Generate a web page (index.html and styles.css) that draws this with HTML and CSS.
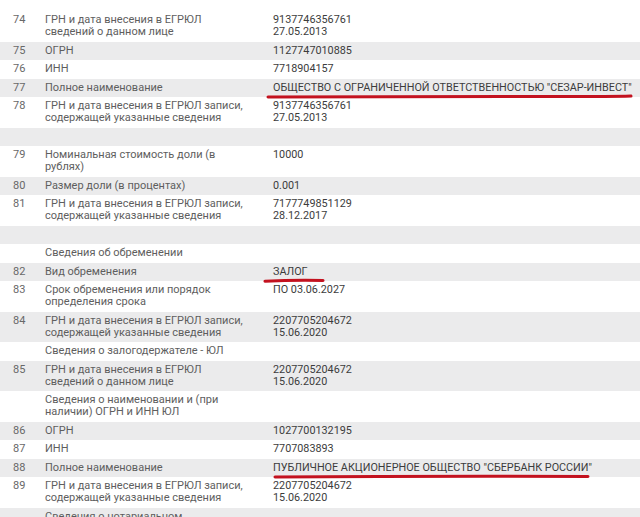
FILE: index.html
```html
<!DOCTYPE html>
<html lang="ru">
<head>
<meta charset="utf-8">
<title>Выписка ЕГРЮЛ</title>
<link rel="stylesheet" href="styles.css">
</head>
<body>
<div class="table">
  <div class="row"><div class="num">74</div><div class="label">ГРН и дата внесения в ЕГРЮЛ<br>сведений о данном лице</div><div class="value">9137746356761<br>27.05.2013</div></div>
  <div class="row"><div class="num">75</div><div class="label">ОГРН</div><div class="value">1127747010885</div></div>
  <div class="row"><div class="num">76</div><div class="label">ИНН</div><div class="value">7718904157</div></div>
  <div class="row"><div class="num">77</div><div class="label">Полное наименование</div><div class="value marked">ОБЩЕСТВО С ОГРАНИЧЕННОЙ ОТВЕТСТВЕННОСТЬЮ "СЕЗАР-ИНВЕСТ"<svg class="mark mark-long" viewBox="0 0 368 5" preserveAspectRatio="none"><path d="M2 2.9 Q120 2.2 240 2.5 T366 2.1"/></svg></div></div>
  <div class="row"><div class="num">78</div><div class="label">ГРН и дата внесения в ЕГРЮЛ записи,<br>содержащей указанные сведения</div><div class="value">9137746356761<br>27.05.2013</div></div>
  <div class="row"><div class="num"></div><div class="label">&nbsp;</div><div class="value"></div></div>
  <div class="row"><div class="num">79</div><div class="label">Номинальная стоимость доли (в<br>рублях)</div><div class="value">10000</div></div>
  <div class="row"><div class="num">80</div><div class="label">Размер доли (в процентах)</div><div class="value">0.001</div></div>
  <div class="row"><div class="num">81</div><div class="label">ГРН и дата внесения в ЕГРЮЛ записи,<br>содержащей указанные сведения</div><div class="value">7177749851129<br>28.12.2017</div></div>
  <div class="row"><div class="num"></div><div class="label">&nbsp;</div><div class="value"></div></div>
  <div class="row"><div class="num"></div><div class="label">Сведения об обременении</div><div class="value"></div></div>
  <div class="row"><div class="num">82</div><div class="label">Вид обременения</div><div class="value marked">ЗАЛОГ<svg class="mark mark-short" viewBox="0 0 64 5" preserveAspectRatio="none"><path d="M2 3.2 Q30 2 62 2.5"/></svg></div></div>
  <div class="row"><div class="num">83</div><div class="label">Срок обременения или порядок<br>определения срока</div><div class="value">ПО 03.06.2027</div></div>
  <div class="row"><div class="num">84</div><div class="label">ГРН и дата внесения в ЕГРЮЛ записи,<br>содержащей указанные сведения</div><div class="value">2207705204672<br>15.06.2020</div></div>
  <div class="row"><div class="num"></div><div class="label">Сведения о залогодержателе - ЮЛ</div><div class="value"></div></div>
  <div class="row"><div class="num">85</div><div class="label">ГРН и дата внесения в ЕГРЮЛ<br>сведений о данном лице</div><div class="value">2207705204672<br>15.06.2020</div></div>
  <div class="row"><div class="num"></div><div class="label">Сведения о наименовании и (при<br>наличии) ОГРН и ИНН ЮЛ</div><div class="value"></div></div>
  <div class="row"><div class="num">86</div><div class="label">ОГРН</div><div class="value">1027700132195</div></div>
  <div class="row"><div class="num">87</div><div class="label">ИНН</div><div class="value">7707083893</div></div>
  <div class="row"><div class="num">88</div><div class="label">Полное наименование</div><div class="value marked">ПУБЛИЧНОЕ АКЦИОНЕРНОЕ ОБЩЕСТВО "СБЕРБАНК РОССИИ"<svg class="mark mark-mid" viewBox="0 0 318 5" preserveAspectRatio="none"><path d="M2 3.1 Q150 2 316 2.5"/></svg></div></div>
  <div class="row"><div class="num">89</div><div class="label">ГРН и дата внесения в ЕГРЮЛ записи,<br>содержащей указанные сведения</div><div class="value">2207705204672<br>15.06.2020</div></div>
  <div class="row"><div class="num"></div><div class="label">Сведения о нотариальном<br>удостоверении договора залога</div><div class="value"></div></div>
</div>
</body>
</html>
```
FILE: styles.css
```css
html, body {
  margin: 0;
  padding: 0;
  background: #ffffff;
}
body {
  font-family: Roboto, "Liberation Sans", sans-serif;
  font-size: 11px;
  color: #5e5e5e;
  overflow: hidden;
}
.table {
  padding-top: 11px;
  display: flex;
  flex-direction: column;
}
.row {
  display: grid;
  grid-template-columns: 45px 228px 1fr;
  line-height: 12px;
  padding: 3px 0 3.5px;
}
.row:nth-child(odd) {
  background: #ffffff;
}
.row:nth-child(even) {
  background: #ebebec;
}
.num {
  padding-left: 13px;
  color: #686868;
}
.value {
  font-size: 10.8px;
  color: #3c3c3c;
  white-space: nowrap;
}
.marked {
  position: relative;
}
.mark {
  position: absolute;
  height: 5px;
  top: 12px;
  overflow: visible;
}
.mark path {
  fill: none;
  stroke: #c3121f;
  stroke-width: 3;
  stroke-linecap: round;
  vector-effect: non-scaling-stroke;
}
.mark-long {
  left: -7px;
  width: 367px;
}
.mark-short {
  left: -10px;
  width: 62px;
}
.mark-mid {
  left: 0;
  width: 317px;
}
```
